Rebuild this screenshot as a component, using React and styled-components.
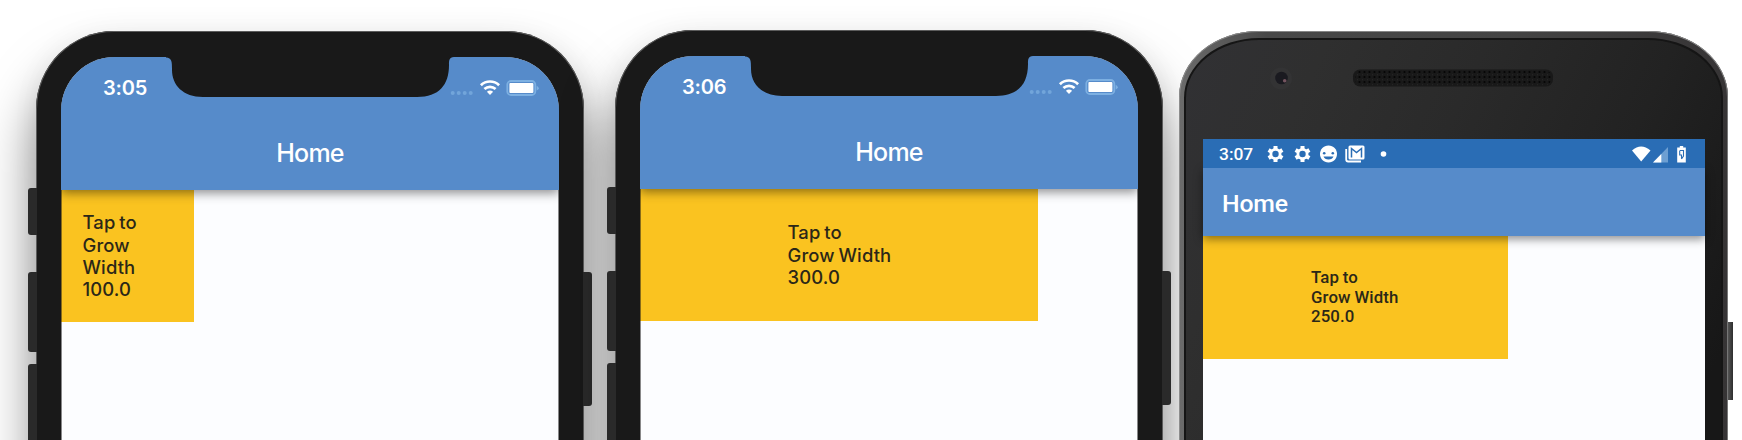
import React from "react";
import styled, { createGlobalStyle } from "styled-components";

const GlobalStyle = createGlobalStyle`
  body { margin: 0; background: #fff; }
  * { box-sizing: border-box; }
`;

const Stage = styled.main`
  display: flex;
  align-items: flex-start;
  width: 1742px;
  height: 440px;
  overflow: hidden;
  background: #fff;
  color: #fff;
`;

const IPhoneFrame = styled.section`
  position: relative;
  flex: none;
  width: 548px;
  height: 900px;
  margin-top: ${(p) => p.$top}px;
  margin-left: ${(p) => p.$left}px;
  padding: 26px 25px;
  border-radius: 78px;
  background: #191919;
  box-shadow: inset 0 0 0 1px #5c5c5c, 0 38px 52px rgba(0, 0, 0, 0.5), 0 0 30px rgba(0, 0, 0, 0.04);
  font-family: Inter, "Liberation Sans", sans-serif;
`;

const SideKey = styled.i`
  position: absolute;
  top: ${(p) => p.$y}px;
  ${(p) => p.$side}: -8px;
  width: 9px;
  height: ${(p) => p.$h}px;
  background: #2a2a2a;
  border-radius: ${(p) => (p.$side === "left" ? "3px 0 0 3px" : "0 3px 3px 0")};
`;

const IPhoneScreen = styled.div`
  position: relative;
  width: 498px;
  height: 840px;
  overflow: hidden;
  border-radius: 54px;
  background: #fcfdff;
  &::after {
    content: "";
    position: absolute;
    inset: 0;
    border-radius: 54px;
    box-shadow: inset 0 0 0 1px rgba(20, 20, 20, 0.5);
  }
`;

const IPhoneHeader = styled.header`
  position: relative;
  z-index: 1;
  height: 133px;
  background: #568bca;
  box-shadow: 0 3px 10px rgba(0, 0, 0, 0.45);
`;

const Notch = styled.svg`
  position: absolute;
  top: 0;
  left: 105px;
  display: block;
`;

const IPhoneStatus = styled.div`
  display: flex;
  justify-content: space-between;
  height: 61px;
  padding: 19px 20px 0 42px;
`;

const IPhoneTime = styled.time`
  font-size: 20px;
  line-height: 24px;
  font-weight: 600;
  letter-spacing: -0.2px;
`;

const IPhoneTitle = styled.h1`
  margin: 0;
  padding-top: 20px;
  text-align: center;
  font-size: 25px;
  line-height: 30px;
  font-weight: 500;
  letter-spacing: -0.75px;
`;

const GrowBox = styled.button`
  display: flex;
  align-items: center;
  justify-content: center;
  width: ${(p) => p.$w}px;
  height: ${(p) => p.$h}px;
  margin: 0;
  padding: 0;
  border: 0;
  background: #fac320;
  color: #2b2718;
  font-family: inherit;
  font-size: ${(p) => p.$font}px;
  line-height: ${(p) => p.$line}px;
  font-weight: 500;
  letter-spacing: ${(p) => p.$track}px;
  word-spacing: ${(p) => p.$space}px;
  text-align: left;
`;

const BoxLabel = styled.span`
  width: ${(p) => p.$w}px;
  white-space: pre;
`;

function IPhoneIcons() {
  return (
    <svg width="90" height="20" viewBox="0 0 90 20" fill="#fff">
      <g fill="#72a5da">
        <circle cx="3.7" cy="17" r="2" />
        <circle cx="9.7" cy="17" r="2" />
        <circle cx="15.7" cy="17" r="2" />
        <circle cx="21.7" cy="17" r="2" />
      </g>
      <g fill="none" stroke="#fff" strokeWidth="2.7">
        <path d="M31.9 9.2a13 13 0 0 1 18.2 0" />
        <path d="M35.4 13a8.2 8.2 0 0 1 11.2 0" />
      </g>
      <path d="M37.9 15.8a4.6 4.6 0 0 1 6.2 0L41 19z" />
      <rect x="58.3" y="5" width="28" height="14" rx="3.6" fill="none" stroke="#7db0e2" strokeWidth="1.8" />
      <path d="M87.7 9.7q4.2 2.4 0 4.9z" fill="#7db0e2" />
      <rect x="60.4" y="7" width="24" height="10" rx="1" />
    </svg>
  );
}

function IPhone({ top, left, time, boxWidth, labelWidth, label }) {
  return (
    <IPhoneFrame $top={top} $left={left}>
      <SideKey $side="left" $y={157} $h={47} />
      <SideKey $side="left" $y={241} $h={80} />
      <SideKey $side="left" $y={333} $h={80} />
      <SideKey $side="right" $y={241} $h={134} />
      <IPhoneScreen>
        <IPhoneHeader>
          <Notch width="288" height="41" viewBox="0 0 288 41">
            <path
              d="M0 0H288C283 .7 283 3 283 8C283 28 273 40 251 40H37C17 40 6 28 6 13C6 5 6 .8 0 .6Z"
              fill="#191919"
            />
          </Notch>
          <IPhoneStatus>
            <IPhoneTime>{time}</IPhoneTime>
            <IPhoneIcons />
          </IPhoneStatus>
          <IPhoneTitle>Home</IPhoneTitle>
        </IPhoneHeader>
        <GrowBox $w={boxWidth} $h={132} $font={18.4} $line={22.4} $track={0.15} $space={-1.2}>
          <BoxLabel $w={labelWidth}>{label}</BoxLabel>
        </GrowBox>
      </IPhoneScreen>
    </IPhoneFrame>
  );
}

const AndroidFrame = styled.section`
  position: relative;
  flex: none;
  width: 549px;
  height: 900px;
  margin-top: 31px;
  margin-left: 16px;
  padding: 7px 5px;
  border-radius: 80px / 66px;
  background: linear-gradient(90deg, #6c6c6c 0%, #484848 16%, #444 60%, #363435 100%);
  box-shadow: inset 0 1px 0 #858585, inset 1px 0 0 #8d8d8d, inset -1px 0 0 #777;
  font-family: Roboto, "Liberation Sans", sans-serif;
`;

const AndroidFace = styled.div`
  height: 884px;
  padding: 99px 16px 0 17px;
  border: 2px solid #151515;
  border-radius: 75px / 60px;
  background: linear-gradient(115deg, #313134 0%, #2f2f2f 15%, #2a2a2a 32%, #222 52%, #171717 72%);
`;

const Camera = styled.svg`
  position: absolute;
  top: 36px;
  left: 90px;
`;

const Speaker = styled.svg`
  position: absolute;
  top: 38px;
  left: 173px;
`;

const AndroidKey = styled.i`
  position: absolute;
  top: 291px;
  right: -5px;
  width: 5px;
  height: 78px;
  background: linear-gradient(90deg, #555, #2d2d2d);
`;

const AndroidScreen = styled.div`
  height: 700px;
  background: #fcfdff;
`;

const AndroidStatus = styled.div`
  position: relative;
  z-index: 1;
  display: flex;
  align-items: center;
  height: 29px;
  padding: 0 16px 0 16px;
  background: #2a6db5;
`;

const AndroidTime = styled.time`
  width: 47px;
  font-size: 17.4px;
  line-height: 22px;
  padding-top: 1px;
  font-weight: 500;
`;

const Notices = styled.div`
  display: flex;
  align-items: center;
  gap: 8px;
  flex: 1;
  & > svg { display: block; flex: none; }
`;

const AndroidBar = styled.header`
  position: relative;
  height: 68px;
  padding: 20px 19px;
  background: #568bca;
  box-shadow: 0 3px 9px rgba(0, 0, 0, 0.45);
`;

const AndroidTitle = styled.h1`
  margin: 0;
  font-size: 24.8px;
  line-height: 32px;
  font-weight: 500;
  letter-spacing: -0.2px;
`;

function Gear() {
  return (
    <svg width="19" height="18" viewBox="0 0 19 18">
      <g stroke="#fff" strokeWidth="4">
        <path d="M9.500 1v16M2.600 5l13.800 8M2.600 13l13.800-8" />
      </g>
      <circle cx="9.500" cy="9" r="6" fill="#fff" />
      <circle cx="9.500" cy="9" r="3.200" fill="#2a6db5" />
    </svg>
  );
}

function Android() {
  return (
    <AndroidFrame>
      <AndroidKey />
      <Camera width="24" height="24" viewBox="0 0 24 24">
        <circle cx="12" cy="11.5" r="11" fill="#333334" />
        <circle cx="12.5" cy="11" r="6.3" fill="#1a1a20" />
        <circle cx="15.7" cy="13.7" r="1.8" fill="#74545f" />
      </Camera>
      <Speaker width="202" height="18" viewBox="0 0 202 18">
        <defs>
          <pattern id="mesh" width="5" height="5" patternUnits="userSpaceOnUse">
            <circle cx="2.5" cy="3" r="1.1" fill="#050505" />
            <circle cx="0" cy="0.5" r="0.9" fill="#262626" />
          </pattern>
        </defs>
        <rect x="1" y="0.5" width="200" height="17" rx="7" fill="#191919" />
        <rect x="3" y="1.5" width="196" height="15" rx="6" fill="url(#mesh)" />
      </Speaker>
      <AndroidFace>
        <AndroidScreen>
          <AndroidStatus>
            <AndroidTime>3:07</AndroidTime>
            <Notices>
              <Gear />
              <Gear />
              <svg width="17" height="18" viewBox="0 0 17 18">
                <path d="M8.5 .5C13.5 .5 17 4.2 17 9S13.5 17.5 8.5 17.5 0 13.8 0 9 3.500 .5 8.500 .5z" fill="#fff" />
                <g fill="#2a6db5">
                  <circle cx="4.200" cy="8.300" r="1.300" />
                  <circle cx="12.800" cy="8.300" r="1.300" />
                  <path d="M3.500 11.500h10c-.8 2-2.300 3-5 3s-4.200-1-5-3z" />
                </g>
              </svg>
              <svg width="20" height="18" viewBox="0 0 20 18">
                <path d="M1.200 4v10.500q0 2 2 2H16" fill="none" stroke="#fff" strokeWidth="1.800" />
                <rect x="3.500" y="0.500" width="16" height="14" rx="1.500" fill="#fff" />
                <path d="M6.500 12.500V3.500l5 4 5-4v9" fill="none" stroke="#2a6db5" strokeWidth="1.500" />
              </svg>
              <svg width="22" height="18" viewBox="0 0 22 18">
                <circle cx="10.500" cy="9" r="2.800" fill="#fff" />
              </svg>
            </Notices>
            <svg width="59" height="18" viewBox="0 0 59 18">
              <path d="M2 5.500Q11 -2.500 20.500 5.500L11.200 16.500z" fill="#fff" />
              <path d="M38 2v15.500H23z" fill="#6d9fd2" />
              <path d="M31.300 9v8.500H23z" fill="#fff" />
              <path d="M49.800 1h3.400v1.500h2.600V17.500h-8.600V2.500h2.600z" fill="#fff" />
              <path d="M50 5.500h3.500v3.500M49.700 5.500v4.500h1.800v3.700M53.500 9v2l-2 3" fill="none" stroke="#2a6db5" strokeWidth="1.100" />
            </svg>
          </AndroidStatus>
          <AndroidBar>
            <AndroidTitle>Home</AndroidTitle>
          </AndroidBar>
          <GrowBox $w={305} $h={123} $font={16.8} $line={19.7} $track={0.12} $space={-0.5}>
            <BoxLabel $w={89}>{"Tap to\nGrow Width\n250.0"}</BoxLabel>
          </GrowBox>
        </AndroidScreen>
      </AndroidFace>
    </AndroidFrame>
  );
}

export default function App() {
  return (
    <>
      <GlobalStyle />
      <Stage>
        <IPhone top={31} left={36} time="3:05" boxWidth={133} labelWidth={90} label={"Tap to\nGrow\nWidth\n100.0"} />
        <IPhone top={30} left={31} time="3:06" boxWidth={398} labelWidth={103} label={"Tap to\nGrow Width\n300.0"} />
        <Android />
      </Stage>
    </>
  );
}
